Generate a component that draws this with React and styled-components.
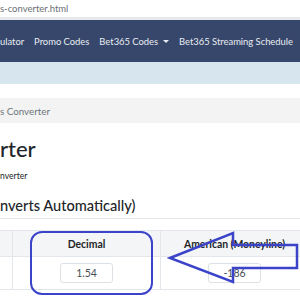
import React from 'react';
import styled, { createGlobalStyle } from 'styled-components';

const GlobalStyle = createGlobalStyle`
  html, body {
    margin: 0;
    padding: 0;
    width: 300px;
    height: 300px;
    overflow: hidden;
    background: #fff;
    font-family: Lato, "Open Sans", sans-serif;
  }
`;

const Page = styled.div`
  position: relative;
  width: 300px;
  height: 300px;
  overflow: hidden;
`;

const AddressBar = styled.div`
  height: 17px;
  display: flex;
  align-items: center;
  font-size: 9.5px;
  color: #6b6f75;
  border-bottom: 3px solid #e6e8eb;
  white-space: nowrap;
`;

const NavBar = styled.nav`
  height: 42px;
  background: #37476b;
  display: flex;
  align-items: center;
  gap: 10px;
  white-space: nowrap;
`;

const NavItem = styled.span`
  color: #e9edf3;
  font-size: 9.4px;
  display: flex;
  align-items: center;
  gap: 4px;
`;

const Caret = styled.span`
  width: 0;
  height: 0;
  border-left: 3px solid transparent;
  border-right: 3px solid transparent;
  border-top: 3.5px solid #e9edf3;
  margin-left: 1px;
`;

const Band = styled.div`
  height: 22px;
  background: #d7e5ef;
  margin-bottom: 14px;
`;

const Breadcrumb = styled.div`
  height: 25px;
  background: #f3f3f3;
  display: flex;
  align-items: center;
  font-size: 9.8px;
  color: #6c757d;
  white-space: nowrap;
`;

const Title = styled.h1`
  margin: 11px 0 0;
  font-size: 22px;
  line-height: 30px;
  font-weight: 500;
  color: #212529;
  white-space: nowrap;
`;

const Sub = styled.p`
  margin: 5px 0 0;
  font-size: 8.6px;
  line-height: 14px;
  color: #212529;
  white-space: nowrap;
`;

const SectionTitle = styled.h3`
  margin: 13px 0 0;
  font-size: 14.6px;
  line-height: 20px;
  font-weight: 500;
  color: #212529;
  white-space: nowrap;
  padding-bottom: 2px;
  border-bottom: 1px solid #e3e6ea;
`;

const Table = styled.div`
  margin-top: 11px;
  display: grid;
  grid-template-columns: 12px 148px 148px;
  border-top: 1px solid #e3e6ea;
  border-bottom: 1px solid #e3e6ea;
`;

const HeadCell = styled.div`
  height: 25px;
  background: #f4f5f6;
  border-left: ${p => (p.$first ? 'none' : '1px solid #e3e6ea')};
  border-bottom: 1px solid #e3e6ea;
  display: flex;
  align-items: center;
  justify-content: center;
  font-size: 10.4px;
  font-weight: 700;
  color: #212529;
  white-space: nowrap;
`;

const BodyCell = styled.div`
  height: 32px;
  border-left: ${p => (p.$first ? 'none' : '1px solid #e3e6ea')};
  display: flex;
  align-items: center;
  justify-content: center;
`;

const Input = styled.div`
  width: 51px;
  height: 18px;
  border: 1px solid #dde1e5;
  border-radius: 3px;
  display: flex;
  align-items: center;
  justify-content: center;
  font-size: 10.5px;
  color: #495057;
`;

const Highlight = styled.div`
  position: absolute;
  left: 30px;
  top: 231px;
  width: 119px;
  height: 60px;
  border: 2.5px solid #3b44c9;
  border-radius: 12px;
  pointer-events: none;
`;

const Arrow = styled.svg`
  position: absolute;
  left: 0;
  top: 0;
  pointer-events: none;
`;

export default function App() {
  return (
    <Page>
      <GlobalStyle />
      <AddressBar>s-converter.html</AddressBar>
      <NavBar>
        <NavItem>ulator</NavItem>
        <NavItem>Promo Codes</NavItem>
        <NavItem>Bet365 Codes <Caret /></NavItem>
        <NavItem>Bet365 Streaming Schedule</NavItem>
      </NavBar>
      <Band />
      <Breadcrumb>s Converter</Breadcrumb>
      <Title>rter</Title>
      <Sub>nverter</Sub>
      <SectionTitle>nverts Automatically)</SectionTitle>
      <Table>
        <HeadCell $first />
        <HeadCell>Decimal</HeadCell>
        <HeadCell>American (Moneyline)</HeadCell>
        <BodyCell $first />
        <BodyCell><Input>1.54</Input></BodyCell>
        <BodyCell><Input>-186</Input></BodyCell>
      </Table>
      <Highlight />
      <Arrow width="300" height="300" viewBox="0 0 300 300">
        <polygon
          points="170,258 233,233 233,245 297,245 297,268 233,268 233,282"
          fill="none"
          stroke="#3b44c9"
          strokeWidth="2.5"
          strokeLinejoin="miter"
        />
      </Arrow>
    </Page>
  );
}
